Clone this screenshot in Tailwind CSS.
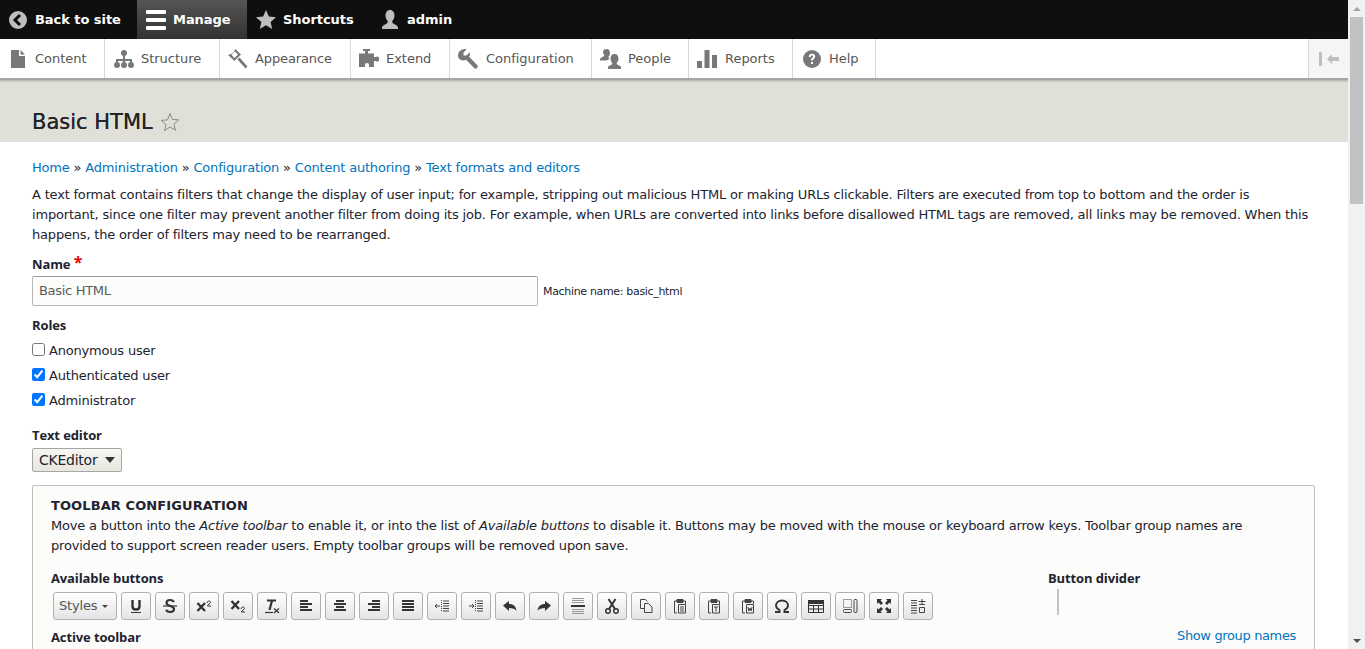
<!DOCTYPE html>
<html lang="en">
  <head>
    <meta charset="UTF-8" />
    <title>Basic HTML</title>
    <script src="https://cdn.jsdelivr.net/npm/@tailwindcss/browser@4"></script>
  </head>
  <body class="h-[649px] overflow-hidden flex bg-white font-['DejaVu_Sans',sans-serif] text-[13px] text-[#222330] tracking-[-0.19px]">
    <div class="w-[1348px] h-[649px] overflow-hidden shrink-0">
      <!-- admin toolbar -->
      <div class="h-[39px] bg-[#0f0f0f] flex text-white font-bold text-[13px] tracking-[-0.05px]">
        <a class="w-[137px] flex items-center pl-[9px] gap-[8px]">
          <svg class="w-[18px] h-[18px]" viewBox="0 0 18 18"><circle cx="9" cy="9" r="9" fill="#bebebe"/><path d="M11 4 6 9l5 5" fill="none" stroke="#0f0f0f" stroke-width="3"/></svg>
          Back to site
        </a>
        <a class="w-[110px] flex items-center pl-[9px] gap-[7px] bg-linear-to-b from-[#555] to-[#333]">
          <svg class="w-[20px] h-[20px]" viewBox="0 0 20 20" fill="#fff"><rect y="0" width="20" height="4" rx="1"/><rect y="8" width="20" height="4" rx="1"/><rect y="16" width="20" height="4" rx="1"/></svg>
          Manage
        </a>
        <a class="w-[124px] flex items-center pl-[9px] gap-[7px]">
          <svg class="w-[20px] h-[20px]" viewBox="0 0 20 20"><path d="M10 0l2.900 6.600 7.100.7-5.400 4.700 1.600 7-6.200-3.700L3.800 19l1.600-7L0 7.300l7.100-.7z" fill="#bebebe"/></svg>
          Shortcuts
        </a>
        <a class="flex items-center pl-[9px] gap-[7px]">
          <svg class="w-[20px] h-[20px]" viewBox="0 0 20 20"><path d="M10 0c3 0 4.500 2.500 4.500 5.500 0 2.500-1.200 4.500-2.200 5.500-.4 1.500.5 2.500 2.200 3.200 2 .8 3.500 1.800 3.500 3.800v1H2v-1c0-2 1.500-3 3.500-3.800 1.700-.7 2.600-1.700 2.200-3.200-1-1-2.200-3-2.200-5.500C5.500 2.500 7 0 10 0z" fill="#bebebe"/></svg>
          admin
        </a>
      </div>
      <!-- tray -->
      <div class="h-[41px] flex bg-white border-b-[2px] border-[#a5a5a5] text-[#565656] tracking-[-0.03px] relative shadow-[0_1px_2px_rgba(0,0,0,0.25)]">
        <a class="w-[105px] border-r border-[#d9d9d9] flex items-center pl-[11px] gap-[10px]">
          <svg class="w-[14px] h-[18px]" viewBox="0 0 14 18" fill="#787878"><path d="M0 0h8v6h6v12H0z"/><path d="M9.500 0 14 4.500H9.500z"/></svg>
          Content
        </a>
        <a class="w-[115px] border-r border-[#d9d9d9] flex items-center pl-[9px] gap-[7px]">
          <svg class="w-[20px] h-[18px]" viewBox="0 0 20 18" fill="#787878"><circle cx="10" cy="3" r="3"/><path d="M9 5h2v4h7v5h-2v-3h-5v3H9v-3H4v3H2V9h7z"/><circle cx="3" cy="15" r="3"/><circle cx="10" cy="15" r="3"/><circle cx="17" cy="15" r="3"/></svg>
          Structure
        </a>
        <a class="w-[131px] border-r border-[#d9d9d9] flex items-center pl-[8px] gap-[7px] tracking-[-0.12px]">
          <svg class="w-[20px] h-[20px]" viewBox="0 0 20 20" fill="#787878"><path d="M7.500 0 13 5.500 6.500 12 0 6l3-1 2-1zM3.500 6l3 3 3.500-3.500-3-3z"/><path d="M9.500 10.500l2-2 8 9-2 2z"/></svg>
          Appearance
        </a>
        <a class="w-[99px] border-r border-[#d9d9d9] flex items-center pl-[8px] gap-[7px]">
          <svg class="w-[20px] h-[19px]" viewBox="0 0 20 19" fill="#787878"><path d="M4 0h7v2H9v2.500h6V8h1.500a2.500 2.500 0 1 1 0 4H15v6H10v-2a2 2 0 1 0-4 0v2H0V4.500h6V2H4z"/></svg>
          Extend
        </a>
        <a class="w-[142px] border-r border-[#d9d9d9] flex items-center pl-[8px] gap-[8px]">
          <svg class="w-[20px] h-[20px]" viewBox="0 0 20 20" fill="#787878"><path d="M7 0c1 0 1.700.3 1.700.3L5.500 3.500v3h3l3.200-3.200s.3.700.3 1.700c0 1-.3 2-.9 2.800l8 8.300c.9.900.9 2 0 2.900s-2 .9-2.900 0L8 10.700c-.8.500-1.800.8-3 .8-3 0-5-2.300-5-5.200C0 3 3 0 7 0z"/></svg>
          Configuration
        </a>
        <a class="w-[97px] border-r border-[#d9d9d9] flex items-center pl-[8px] gap-[7px]">
          <svg class="w-[21px] h-[20px]" viewBox="0 0 21 20" fill="#787878"><path d="M6.500 0C9 0 10 2 10 4c0 1.500-.7 3-1.500 3.800-.3 1 .2 1.500 1 2-1.500 1-2.500 1.700-3.500 1.700H0v-1c0-1.300 1-2 2.500-2.500 1.200-.4 2-1 1.700-2.200C3.500 5 3 3.800 3 3 3 1 4.500 0 6.500 0z"/><path d="M14.500 5c2.500 0 4 2 4 4.500 0 1.800-.8 3.300-1.700 4.200-.3 1.300.4 2 1.700 2.500 1.500.5 2.500 1 2.500 2.300v1.500H8v-1.500c0-1.300 1-1.800 2.500-2.300 1.300-.5 2-1.200 1.700-2.500-.9-.9-1.700-2.400-1.700-4.200C10.500 7 12 5 14.500 5z"/></svg>
          People
        </a>
        <a class="w-[104px] border-r border-[#d9d9d9] flex items-center pl-[8px] gap-[8px]">
          <svg class="w-[20px] h-[18px]" viewBox="0 0 20 18" fill="#787878"><rect y="11" width="5" height="7"/><rect x="7.500" width="5" height="18"/><rect x="15" y="5" width="5" height="13"/></svg>
          Reports
        </a>
        <a class="w-[83px] border-r border-[#d9d9d9] flex items-center pl-[10px] gap-[8px]">
          <svg class="w-[18px] h-[18px]" viewBox="0 0 18 18"><circle cx="9" cy="9" r="9" fill="#787878"/><path d="M5.800 7c0-2 1.400-3.200 3.300-3.200s3.100 1.100 3.100 2.800c0 2.300-2.300 2.300-2.300 4H8c0-2.700 2.100-2.800 2.100-4 0-.6-.4-1-1-1-.7 0-1.200.5-1.200 1.400z" fill="#fff"/><rect x="8" y="12" width="2" height="2" fill="#fff"/></svg>
          Help
        </a>
        <div class="ml-auto w-[40px] border-l border-[#d9d9d9] bg-[#f5f5f5] flex items-center justify-center gap-[4px]">
          <svg class="w-[20px] h-[14px]" viewBox="0 0 20 14" fill="#bfbfbf"><rect width="3" height="14"/><path d="M8 7l5-5v3h7v4h-7v3z"/></svg>
        </div>
      </div>
      <!-- page title -->
      <div class="h-[62px] bg-[#e0e0d8] pl-[32px] pt-[22px] flex items-center gap-[7px]">
        <h1 class="text-[21px] leading-[26px] text-[#232429] tracking-normal [text-shadow:0_0_0.4px_#232429]">Basic HTML</h1>
        <svg class="w-[20px] h-[20px]" viewBox="0 0 20 20"><path d="M10 1.500l2.500 5.900 6.300.5-4.800 4.100 1.500 6.200L10 15l-5.500 3.700 1.500-6.200-4.800-4.100 6.300-.5z" fill="none" stroke="#8b8b7f"/></svg>
      </div>
      <div class="px-[32px]">
        <div class="mt-[16px] leading-[20px] text-[#0074bd] tracking-[-0.19px]">
          <a>Home</a> <span class="text-[#222330]">»</span> <a>Administration</a> <span class="text-[#222330]">»</span> <a>Configuration</a> <span class="text-[#222330]">»</span> <a>Content authoring</a> <span class="text-[#222330]">»</span> <a>Text formats and editors</a>
        </div>
        <p class="mt-[7px] leading-[20px] w-[1290px]">A text format contains filters that change the display of user input; for example, stripping out malicious HTML or making URLs clickable. Filters are executed from top to bottom and the order is<br />important, since one filter may prevent another filter from doing its job. For example, when URLs are converted into links before disallowed HTML tags are removed, all links may be removed. When this<br />happens, the order of filters may need to be rearranged.</p>

        <label class="block mt-[8px] font-['Open_Sans',sans-serif] font-bold tracking-[-0.12px] leading-[20px]">Name <span class="text-[#ee0000] relative -top-[1px] text-[16px]">*</span></label>
        <div class="flex items-center gap-[5px] mt-[2px]">
          <input value="Basic HTML" class="w-[506px] h-[30px] border border-[#b8b8b8] border-t-[#999] rounded-[2px] bg-[#fcfcfa] px-[6px] pb-[2px] text-[13px] text-[#595959] tracking-[-0.3px]" />
          <span class="pt-[2px] text-[11px] text-[#222330] tracking-[-0.33px]">Machine name: basic_html</span>
        </div>

        <div class="mt-[9px] font-['Open_Sans',sans-serif] font-bold tracking-[-0.12px] leading-[20px]">Roles</div>
        <div class="mt-[6px] flex flex-col gap-[5px]">
          <label class="h-[20px] flex items-center gap-[4px]"><input type="checkbox" class="w-[13px] h-[13px] mb-[3px]" />Anonymous user</label>
          <label class="h-[20px] flex items-center gap-[4px]"><input type="checkbox" checked class="w-[13px] h-[13px] mb-[3px]" />Authenticated user</label>
          <label class="h-[20px] flex items-center gap-[4px]"><input type="checkbox" checked class="w-[13px] h-[13px] mb-[3px]" />Administrator</label>
        </div>

        <div class="mt-[14px] font-['Open_Sans',sans-serif] font-bold tracking-[-0.12px] leading-[20px]">Text editor</div>
        <div class="mt-[3px] w-[90px] h-[24px] border border-[#a6a6a6] rounded-[2px] bg-linear-to-b from-[#f6f6f3] to-[#e7e7df] flex items-center justify-between pl-[6px] pr-[6px] text-[14px] tracking-[-0.25px] text-[#222330]">
          CKEditor
          <svg class="w-[10px] h-[6px]" viewBox="0 0 10 6"><path d="M0 0h10L5 6z" fill="#333"/></svg>
        </div>

        <!-- toolbar configuration -->
        <div class="mt-[13px] w-[1283px] h-[200px] border border-[#bfbfba] rounded-[2px] bg-[#fcfcfa] pl-[18px] pt-[10px] relative">
          <h2 class="font-bold leading-[20px] tracking-[0.1px]">TOOLBAR CONFIGURATION</h2>
          <p class="leading-[20px]">Move a button into the <em>Active toolbar</em> to enable it, or into the list of <em>Available buttons</em> to disable it. Buttons may be moved with the mouse or keyboard arrow keys. Toolbar group names are<br />provided to support screen reader users. Empty toolbar groups will be removed upon save.</p>
          <div class="mt-[12px] flex">
            <div class="w-[997px]">
              <div class="font-['Open_Sans',sans-serif] font-bold tracking-[-0.12px] leading-[20px]">Available buttons</div>
              <div class="ml-[2px] mt-[4px] flex gap-[4px] text-[#333]">
                <div class="w-[64px] h-[28px] border border-[#b0b0b0] rounded-[3px] bg-linear-to-b from-[#fff] to-[#e4e4e4] flex items-center pl-[5px] gap-[5px] text-[#555]">Styles<svg class="w-[6px] h-[3px]" viewBox="0 0 6 3"><path d="M0 0h6L3 3z" fill="#444"/></svg></div>
                <div class="w-[30px] h-[28px] border border-[#b0b0b0] rounded-[3px] bg-linear-to-b from-[#fff] to-[#e4e4e4] flex items-center justify-center">
                  <svg class="w-[16px] h-[16px]" viewBox="0 0 16 16" fill="none" stroke="#333"><path d="M4.500 2v6.500c0 2 1.300 3 3.500 3s3.500-1 3.500-3V2" stroke-width="2.400"/><path d="M3 14.500h10"/></svg>
                </div>
                <div class="w-[30px] h-[28px] border border-[#b0b0b0] rounded-[3px] bg-linear-to-b from-[#fff] to-[#e4e4e4] flex items-center justify-center">
                  <svg class="w-[16px] h-[16px]" viewBox="0 0 16 16" fill="none" stroke="#333"><path d="M12 4C11 2.500 9.500 2 8 2 6 2 4.500 3 4.500 4.800 4.500 9 12 7 12 11c0 2-1.700 3-4 3-1.800 0-3-.7-4-2" stroke-width="2.200"/><path d="M1 8h14" stroke-width="1.200"/></svg>
                </div>
                <div class="w-[30px] h-[28px] border border-[#b0b0b0] rounded-[3px] bg-linear-to-b from-[#fff] to-[#e4e4e4] flex items-center justify-center">
                  <svg class="w-[16px] h-[16px]" viewBox="0 0 16 16" fill="none" stroke="#333"><path d="M1.500 5 9 13M9 5l-7.500 8" stroke-width="2.400"/><path d="M11 5c0-2.500 3.500-2.500 3.500-.7 0 1.300-3 2-3 3.700h3.500" stroke-width="1"/></svg>
                </div>
                <div class="w-[30px] h-[28px] border border-[#b0b0b0] rounded-[3px] bg-linear-to-b from-[#fff] to-[#e4e4e4] flex items-center justify-center">
                  <svg class="w-[16px] h-[16px]" viewBox="0 0 16 16" fill="none" stroke="#333"><path d="M1.500 3 9 11M9 3l-7.500 8" stroke-width="2.400"/><path d="M11 11c0-2.500 3.500-2.500 3.500-.7 0 1.300-3 2-3 3.700h3.500" stroke-width="1"/></svg>
                </div>
                <div class="w-[30px] h-[28px] border border-[#b0b0b0] rounded-[3px] bg-linear-to-b from-[#fff] to-[#e4e4e4] flex items-center justify-center">
                  <svg class="w-[16px] h-[16px]" viewBox="0 0 16 16" fill="none" stroke="#333"><path d="M3 2.500h9" stroke-width="2"/><path d="M8 2.500 5.500 12" stroke-width="2.200"/><path d="M1 14.500h8" stroke-width="1.200"/><path d="M10 10.500l5 4.500M15 10.500l-5 4.500" stroke-width="1.300"/></svg>
                </div>
                <div class="w-[30px] h-[28px] border border-[#b0b0b0] rounded-[3px] bg-linear-to-b from-[#fff] to-[#e4e4e4] flex items-center justify-center">
                  <svg class="w-[16px] h-[16px]" viewBox="0 0 16 16" fill="#333"><rect x="2" y="2" width="8" height="2"/><rect x="2" y="5" width="12" height="2"/><rect x="2" y="8" width="8" height="2"/><rect x="2" y="11" width="12" height="2"/></svg>
                </div>
                <div class="w-[30px] h-[28px] border border-[#b0b0b0] rounded-[3px] bg-linear-to-b from-[#fff] to-[#e4e4e4] flex items-center justify-center">
                  <svg class="w-[16px] h-[16px]" viewBox="0 0 16 16" fill="#333"><rect x="4" y="2" width="8" height="2"/><rect x="2" y="5" width="12" height="2"/><rect x="4" y="8" width="8" height="2"/><rect x="2" y="11" width="12" height="2"/></svg>
                </div>
                <div class="w-[30px] h-[28px] border border-[#b0b0b0] rounded-[3px] bg-linear-to-b from-[#fff] to-[#e4e4e4] flex items-center justify-center">
                  <svg class="w-[16px] h-[16px]" viewBox="0 0 16 16" fill="#333"><rect x="6" y="2" width="8" height="2"/><rect x="2" y="5" width="12" height="2"/><rect x="6" y="8" width="8" height="2"/><rect x="2" y="11" width="12" height="2"/></svg>
                </div>
                <div class="w-[30px] h-[28px] border border-[#b0b0b0] rounded-[3px] bg-linear-to-b from-[#fff] to-[#e4e4e4] flex items-center justify-center">
                  <svg class="w-[16px] h-[16px]" viewBox="0 0 16 16" fill="#333"><rect x="2" y="2" width="12" height="2"/><rect x="2" y="5" width="12" height="2"/><rect x="2" y="8" width="12" height="2"/><rect x="2" y="11" width="12" height="2"/></svg>
                </div>
                <div class="w-[30px] h-[28px] border border-[#b0b0b0] rounded-[3px] bg-linear-to-b from-[#fff] to-[#e4e4e4] flex items-center justify-center">
                  <svg class="w-[16px] h-[16px]" viewBox="0 0 16 16" fill="none" stroke="#444"><path d="M7.500 2v12" stroke-dasharray="1 1"/><path d="M9 3h6M9 5.500h6M9 8h6M9 10.500h6M9 13h6"/><path d="M6 8H1M3 6 1 8l2 2"/></svg>
                </div>
                <div class="w-[30px] h-[28px] border border-[#b0b0b0] rounded-[3px] bg-linear-to-b from-[#fff] to-[#e4e4e4] flex items-center justify-center">
                  <svg class="w-[16px] h-[16px]" viewBox="0 0 16 16" fill="none" stroke="#444"><path d="M7.500 2v12" stroke-dasharray="1 1"/><path d="M9 3h6M9 5.500h6M9 8h6M9 10.500h6M9 13h6"/><path d="M1 8h5M4 6l2 2-2 2"/></svg>
                </div>
                <div class="w-[30px] h-[28px] border border-[#b0b0b0] rounded-[3px] bg-linear-to-b from-[#fff] to-[#e4e4e4] flex items-center justify-center">
                  <svg class="w-[16px] h-[16px]" viewBox="0 0 16 16" fill="#333"><path d="M1 7.500 7 3v3c4.500 0 7 2.500 7.500 7-1.500-2.300-4-3-7.500-3v3z"/></svg>
                </div>
                <div class="w-[30px] h-[28px] border border-[#b0b0b0] rounded-[3px] bg-linear-to-b from-[#fff] to-[#e4e4e4] flex items-center justify-center">
                  <svg class="w-[16px] h-[16px]" viewBox="0 0 16 16" fill="#333"><path d="M15 7.500 9 3v3C4.500 6 2 8.500 1.500 13 3 10.700 5.500 10 9 10v3z"/></svg>
                </div>
                <div class="w-[30px] h-[28px] border border-[#b0b0b0] rounded-[3px] bg-linear-to-b from-[#fff] to-[#e4e4e4] flex items-center justify-center">
                  <svg class="w-[16px] h-[18px]" viewBox="0 0 16 18" fill="none"><path d="M2 1.500h12M2 3.500h12M2 5.500h12M2 12.500h12M2 14.500h12M2 16.500h12" stroke="#999"/><path d="M1 9h14" stroke="#333" stroke-width="2"/></svg>
                </div>
                <div class="w-[30px] h-[28px] border border-[#b0b0b0] rounded-[3px] bg-linear-to-b from-[#fff] to-[#e4e4e4] flex items-center justify-center">
                  <svg class="w-[16px] h-[16px]" viewBox="0 0 16 16" fill="none" stroke="#333"><circle cx="4" cy="13" r="2.300" stroke-width="1.500"/><circle cx="12" cy="13" r="2.300" stroke-width="1.500"/><path d="M5 11 11.500 1M11 11 4.500 1" stroke-width="2"/></svg>
                </div>
                <div class="w-[30px] h-[28px] border border-[#b0b0b0] rounded-[3px] bg-linear-to-b from-[#fff] to-[#e4e4e4] flex items-center justify-center">
                  <svg class="w-[16px] h-[16px]" viewBox="0 0 16 16" fill="none" stroke="#444"><path d="M6 10.500H2.500v-9h5l2 2"/><path d="M6.500 5.500h4l3.500 3.500v5.500H6.500z"/></svg>
                </div>
                <div class="w-[30px] h-[28px] border border-[#b0b0b0] rounded-[3px] bg-linear-to-b from-[#fff] to-[#e4e4e4] flex items-center justify-center">
                  <svg class="w-[16px] h-[16px]" viewBox="0 0 16 16" fill="none" stroke="#444"><path d="M5 3H2.500v12H5M11 3h2.500v3"/><path d="M5 1.500h6v3H5z" fill="#444"/><path d="M6.500 6.500h7v8.500h-7zM8 9h4M8 11h4M8 13h4"/></svg>
                </div>
                <div class="w-[30px] h-[28px] border border-[#b0b0b0] rounded-[3px] bg-linear-to-b from-[#fff] to-[#e4e4e4] flex items-center justify-center">
                  <svg class="w-[16px] h-[16px]" viewBox="0 0 16 16" fill="none" stroke="#444"><path d="M5 3H2.500v12H5M11 3h2.500v3"/><path d="M5 1.500h6v3H5z" fill="#444"/><path d="M6.500 6.500h7v8.500h-7zM8 9h4M10 9v4.500"/></svg>
                </div>
                <div class="w-[30px] h-[28px] border border-[#b0b0b0] rounded-[3px] bg-linear-to-b from-[#fff] to-[#e4e4e4] flex items-center justify-center">
                  <svg class="w-[16px] h-[16px]" viewBox="0 0 16 16" fill="none" stroke="#444"><path d="M5 3H2.500v12H5M11 3h2.500v3"/><path d="M5 1.500h6v3H5z" fill="#444"/><path d="M6.500 6.500h7v8.500h-7zM8 9l.8 4 1.200-3 1.200 3 .8-4"/></svg>
                </div>
                <div class="w-[30px] h-[28px] border border-[#b0b0b0] rounded-[3px] bg-linear-to-b from-[#fff] to-[#e4e4e4] flex items-center justify-center">
                  <svg class="w-[16px] h-[16px]" viewBox="0 0 16 16" fill="none" stroke="#333" stroke-width="1.900"><path d="M1 14h4.500v-2C3.500 11 2 9.500 2 7.500 2 4.500 4.500 2.500 8 2.500s6 2 6 5c0 2-1.500 3.500-3.500 4.500v2H15"/></svg>
                </div>
                <div class="w-[30px] h-[28px] border border-[#b0b0b0] rounded-[3px] bg-linear-to-b from-[#fff] to-[#e4e4e4] flex items-center justify-center">
                  <svg class="w-[16px] h-[16px]" viewBox="0 0 16 16" fill="none" stroke="#333"><path d="M.5 2.500h15v12H.5zM.5 7.500h15M.5 11h15M5.500 7.500v7M10.500 7.500v7"/><rect y="2" width="16" height="4" fill="#333" stroke="none"/></svg>
                </div>
                <div class="w-[30px] h-[28px] border border-[#b0b0b0] rounded-[3px] bg-linear-to-b from-[#fff] to-[#e4e4e4] flex items-center justify-center">
                  <svg class="w-[16px] h-[16px]" viewBox="0 0 16 16" fill="none" stroke="#444"><path d="M1.500 1.500h8v8h-8z" stroke-dasharray="1 1"/><rect x="12" y="1.500" width="3" height="13" rx="1"/><rect x="1.500" y="11.500" width="8" height="3" rx="1"/></svg>
                </div>
                <div class="w-[30px] h-[28px] border border-[#b0b0b0] rounded-[3px] bg-linear-to-b from-[#fff] to-[#e4e4e4] flex items-center justify-center">
                  <svg class="w-[16px] h-[16px]" viewBox="0 0 16 16" fill="#333"><path d="M1 1h5L4.500 2.500 7 5 5 7 2.500 4.500 1 6zM15 1v5l-1.500-1.500L11 7 9 5l2.500-2.500L10 1zM1 15v-5l1.500 1.500L5 9l2 2-2.500 2.500L6 15zM15 15h-5l1.500-1.500L9 11l2-2 2.500 2.500L15 10z"/></svg>
                </div>
                <div class="w-[30px] h-[28px] border border-[#b0b0b0] rounded-[3px] bg-linear-to-b from-[#fff] to-[#e4e4e4] flex items-center justify-center">
                  <svg class="w-[16px] h-[16px]" viewBox="0 0 16 16" fill="none" stroke="#444"><path d="M1 2.500h6M1 5h6M1 7.500h6M1 10h6M1 12.500h6M1 15h6M8.500 3.500h7M12 1v5M9 6.500h6M9.500 9.500h5v5h-5z"/></svg>
                </div>
              </div>
              <div class="mt-[7px] font-['Open_Sans',sans-serif] font-bold tracking-[-0.12px] leading-[20px]">Active toolbar</div>
            </div>
            <div>
              <div class="font-['Open_Sans',sans-serif] font-bold tracking-[-0.12px] leading-[20px]">Button divider</div>
              <div class="ml-[9px] mt-[1px] w-[2px] h-[26px] bg-[#c4c4c4]"></div>
              <a class="block ml-[129px] mt-[11px] leading-[20px] text-[#0074bd] tracking-[-0.36px] whitespace-nowrap">Show group names</a>
            </div>
          </div>
        </div>
      </div>
    </div>
    <!-- scrollbar -->
    <div class="w-[17px] h-[649px] bg-[#f1f1f1] shrink-0 flex flex-col items-center">
      <div class="h-[17px] flex items-center"><svg class="w-[8px] h-[4px]" viewBox="0 0 8 4"><path d="M0 4h8L4 0z" fill="#a3a3a3"/></svg></div>
      <div class="w-[13px] h-[187px] bg-[#c1c1c1]"></div>
      <div class="mt-auto h-[17px] flex items-center"><svg class="w-[8px] h-[4px]" viewBox="0 0 8 4"><path d="M0 0h8L4 4z" fill="#505050"/></svg></div>
    </div>
  </body>
</html>
